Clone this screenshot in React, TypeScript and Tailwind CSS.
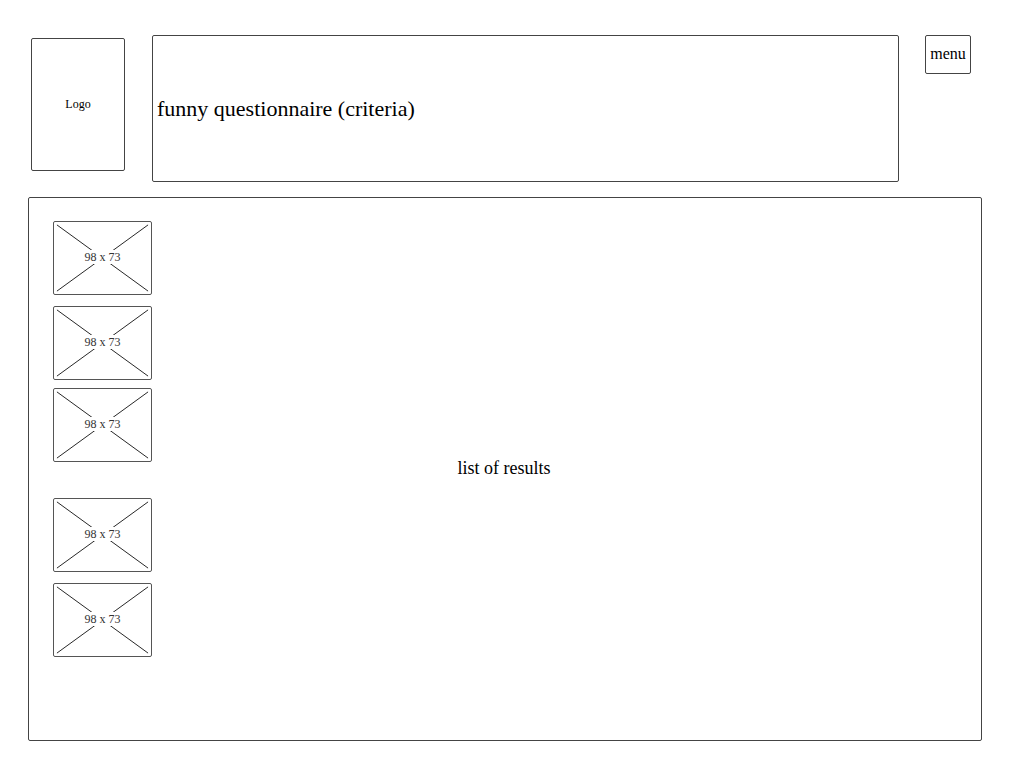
import React from "react";

const serif = "font-['Liberation_Serif',serif]";

function Placeholder({ className = "" }: { className?: string }) {
  return (
    <div className={`relative w-[99px] h-[74px] border border-[#555] rounded-[2px] bg-white ${className}`}>
      <svg className="absolute inset-0 w-full h-full" viewBox="0 0 99 74" preserveAspectRatio="none">
        <line x1="3" y1="3" x2="96" y2="71" stroke="#222" strokeWidth="1" />
        <line x1="96" y1="3" x2="3" y2="71" stroke="#222" strokeWidth="1" />
      </svg>
      <div className="absolute inset-0 flex items-center justify-center pb-[2px]">
        <span className="bg-white px-[2px] text-[12px] leading-[14px] text-[#333]">98 x 73</span>
      </div>
    </div>
  );
}

export default function App() {
  return (
    <div className={`w-[1024px] h-[768px] bg-white text-black ${serif}`}>
      <div className="flex items-start pl-[31px] pt-[35px]">
        <div className="mt-[3px] w-[94px] h-[133px] border border-[#444] rounded-[2px] flex items-center justify-center pb-[2px] text-[12px]">
          Logo
        </div>
        <div className="ml-[27px] w-[747px] h-[147px] border border-[#444] rounded-[2px] flex items-center pl-[4px] pb-[1px] text-[22px]">
          funny questionnaire (criteria)
        </div>
        <div className="ml-[26px] w-[46px] h-[39px] border border-[#444] rounded-[2px] flex items-center justify-center pb-[2px] text-[16px]">
          menu
        </div>
      </div>
      <div className="mt-[15px] ml-[28px] w-[954px] h-[544px] border border-[#444] rounded-[2px] grid">
        <div className="col-start-1 row-start-1 flex flex-col pl-[24px] pt-[23px]">
          <Placeholder />
          <Placeholder className="mt-[11px]" />
          <Placeholder className="mt-[8px]" />
          <Placeholder className="mt-[36px]" />
          <Placeholder className="mt-[11px]" />
        </div>
        <div className="col-start-1 row-start-1 flex items-center justify-center pr-[2px] pb-[2px] text-[18px]">
          list of results
        </div>
      </div>
    </div>
  );
}
